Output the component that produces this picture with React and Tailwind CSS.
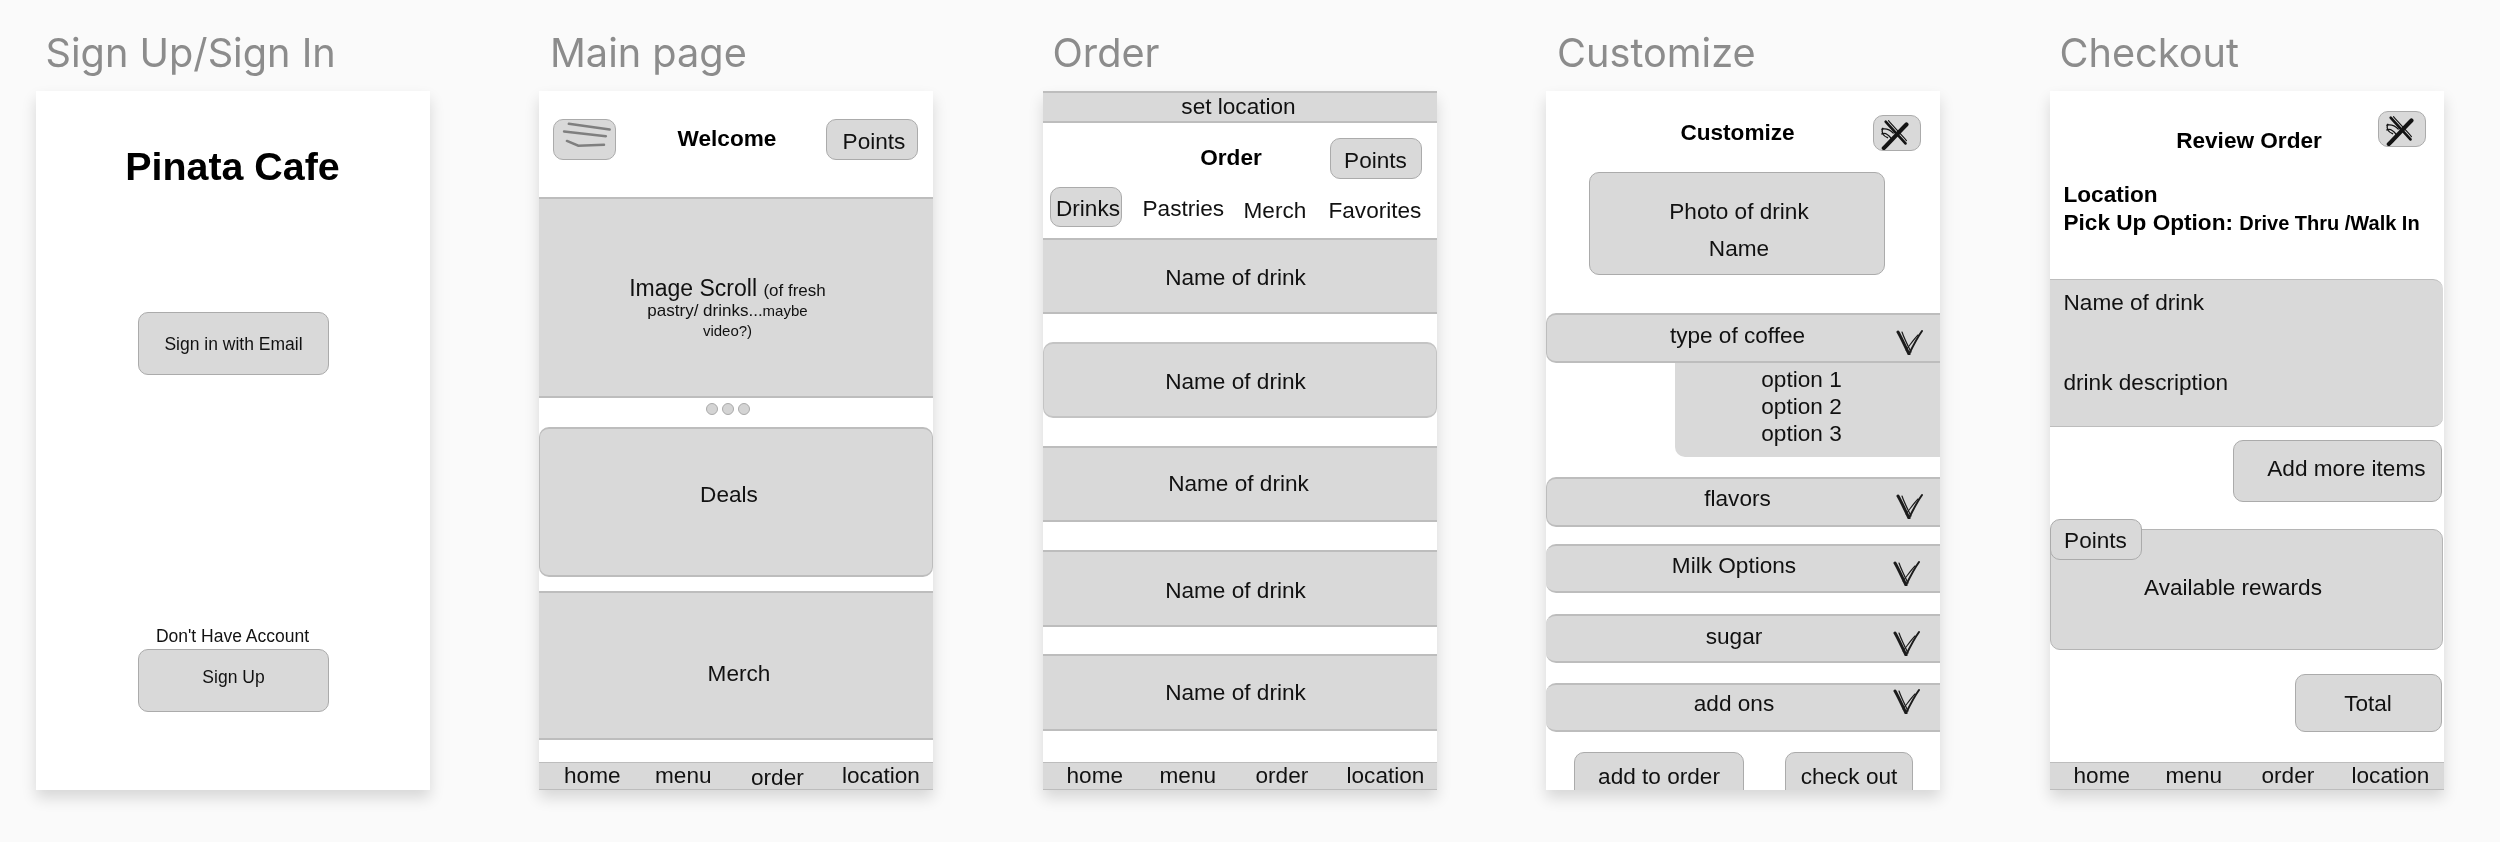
const FONT = "font-['Liberation_Sans',Arial,sans-serif]";

function Frame({ title, titleClass = "ml-[11px]", children }) {
  return (
    <div className="flex w-[394px] flex-col">
      <div className={`flex h-[91px] items-start pt-[28px] font-['Inter',sans-serif] text-[39.7px] leading-[50px] text-[#8c8c8c] ${titleClass}`}>
        {title}
      </div>
      <div className={`flex h-[699px] flex-col overflow-hidden bg-white text-[22.6px] leading-[26px] text-[#111] shadow-[0_8px_14px_rgba(0,0,0,0.14)] ${FONT}`}>
        {children}
      </div>
    </div>
  );
}

function Nav({ cols, orderClass = "" }) {
  return (
    <div className={`mt-auto grid h-[28px] shrink-0 items-start border-y border-[#bdbdbd] bg-[#d9d9d9] ${cols}`}>
      <span>home</span>
      <span>menu</span>
      <span className={orderClass}>order</span>
      <span>location</span>
    </div>
  );
}

function Chevron({ className }) {
  return (
    <svg viewBox="0 0 28 26" className={`absolute h-[26px] w-[28px] ${className}`} fill="none" stroke="#1c1c1c" strokeLinecap="round">
      <path d="M2 3 C5 8 9 17 13 25" strokeWidth="3" />
      <path d="M6 3 C8 9 12 17 15 23" strokeWidth="1.2" />
      <path d="M13 25 C17 17 21 9 26 2" strokeWidth="2" />
      <path d="M10 21 C14 16 18 10 22 6" strokeWidth="1.1" />
    </svg>
  );
}

function CloseSketch() {
  return (
    <svg viewBox="0 0 48 36" className="h-full w-full" fill="none" stroke="#141414" strokeLinecap="round">
      <path d="M10 34 C18 26 26 17 34 9" strokeWidth="4.4" />
      <path d="M12 6 C19 14 26 21 33 29" strokeWidth="2.8" />
      <path d="M15 5 C21 12 27 18 34 26" strokeWidth="1.2" />
      <path d="M8 14 C12 13 17 15 20 18 M8 19 C12 17 15 20 18 24 M9 13 C7 17 9 21 14 23" strokeWidth="1.4" />
    </svg>
  );
}

function Btn({ className = "", children }) {
  return (
    <div className={`flex shrink-0 items-center justify-center rounded-[10px] border border-[#ababab] bg-[#d9d9d9] ${className}`}>
      {children}
    </div>
  );
}

function Band({ className = "", children }) {
  return (
    <div className={`relative flex shrink-0 items-center justify-center border-y-2 border-[#bdbdbd] bg-[#d9d9d9] ${className}`}>
      {children}
    </div>
  );
}

function SignIn() {
  return (
    <Frame title="Sign Up/Sign In" titleClass="ml-[10px]">
      <div className="flex flex-col items-center text-[17.5px]">
        <h1 className="mt-[53px] text-[39.4px] leading-[44px] font-bold text-black">Pinata Cafe</h1>
        <Btn className="mt-[124px] ml-[2px] h-[63px] w-[191px]">Sign in with Email</Btn>
        <div className="mt-[251px] leading-[20px]">Don't Have Account</div>
        <Btn className="mt-[3px] ml-[2px] h-[63px] w-[191px] pb-[8px]">Sign Up</Btn>
      </div>
    </Frame>
  );
}

function MainPage() {
  return (
    <Frame title="Main page">
      <div className="flex h-[106px] shrink-0 items-start pt-[28px]">
        <Btn className="ml-[14px] h-[41px] w-[63px]">
          <svg viewBox="0 0 63 41" className="h-full w-full" fill="none" stroke="#7f7f7f" strokeWidth="2.6" strokeLinecap="round">
            <path d="M15 4 L58 10" />
            <path d="M10 12 L54 17" />
            <path d="M13 22 L25 27 L52 26" />
          </svg>
        </Btn>
        <div className="mt-[7px] flex-1 pl-[12px] text-center font-bold text-black">Welcome</div>
        <Btn className="mr-[15px] h-[41px] w-[92px] pt-[4px] pl-[4px]">Points</Btn>
      </div>
      <Band className="h-[201px] flex-col pt-[20px] pr-[17px]">
        <div className="h-[25px] text-[23px]">Image Scroll <span className="text-[17px]">(of fresh</span></div>
        <div className="h-[21px] text-[17px] leading-[22px]">pastry/ drinks...<span className="text-[15px]">maybe</span></div>
        <div className="h-[20px] text-[15px] leading-[20px]">video?)</div>
      </Band>
      <div className="flex h-[29px] shrink-0 items-center justify-center gap-[4px] pr-[17px] pb-[7px]">
        <span className="h-[12px] w-[12px] rounded-full border border-[#aaa] bg-[#d4d4d4]" />
        <span className="h-[12px] w-[12px] rounded-full border border-[#aaa] bg-[#d4d4d4]" />
        <span className="h-[12px] w-[12px] rounded-full border border-[#aaa] bg-[#d4d4d4]" />
      </div>
      <Band className="h-[150px] rounded-[10px] border-x border-[#b5b5b5] pr-[14px] pb-[14px]">Deals</Band>
      <Band className="mt-[14px] h-[149px] pt-[16px] pl-[6px]">Merch</Band>
      <Nav cols="grid-cols-[91px_96px_91px_1fr] pl-[25px]" orderClass="pt-[2px]" />
    </Frame>
  );
}

function Order() {
  return (
    <Frame title="Order" titleClass="ml-[10px]">
      <Band className="h-[32px] pb-[1px] pr-[2px]">set location</Band>
      <div className="flex shrink-0 items-start pt-[15px]">
        <div className="mt-[7px] flex-1 pl-[90px] text-center font-bold text-black">Order</div>
        <Btn className="mr-[15px] h-[41px] w-[92px] pt-[4px]">Points</Btn>
      </div>
      <div className="mt-[8px] grid h-[51px] shrink-0 grid-cols-[93px_101px_85px_1fr] items-start pl-[7px]">
        <Btn className="h-[40px] w-[72px] pt-[4px] pl-[5px]">Drinks</Btn>
        <span className="mt-[9px]">Pastries</span>
        <span className="mt-[11px]">Merch</span>
        <span className="mt-[11px]">Favorites</span>
      </div>
      <Band className="h-[76px] pt-[4px] pr-[8px]">Name of drink</Band>
      <Band className="mt-[28px] h-[76px] rounded-[10px] border-x border-[#c4c4c4] pt-[4px] pr-[8px]">Name of drink</Band>
      <Band className="mt-[28px] h-[76px] pr-[2px]">Name of drink</Band>
      <Band className="mt-[28px] h-[77px] pt-[5px] pr-[8px]">Name of drink</Band>
      <Band className="mt-[27px] h-[77px] pt-[1px] pr-[8px]">Name of drink</Band>
      <Nav cols="grid-cols-[93px_96px_91px_1fr] pl-[24px]" />
    </Frame>
  );
}

function Customize() {
  return (
    <Frame title="Customize">
      <div className="flex shrink-0 items-start pt-[24px]">
        <div className="mt-[5px] flex-1 pl-[56px] text-center font-bold text-black">Customize</div>
        <Btn className="mr-[19px] h-[36px] w-[48px] overflow-hidden"><CloseSketch /></Btn>
      </div>
      <Btn className="mt-[21px] ml-[43px] h-[103px] w-[296px] flex-col pt-[12px] pl-[4px] leading-[37px]">
        <div>Photo of drink</div>
        <div>Name</div>
      </Btn>
      <Band className="mt-[38px] h-[50px] rounded-l-[10px] border-l border-[#bbb] pr-[12px] pb-[4px]">
        type of coffee
        <Chevron className="top-[14px] right-[16px]" />
      </Band>
      <div className="ml-[129px] flex h-[94px] shrink-0 flex-col items-center rounded-bl-[10px] bg-[#d9d9d9] pt-[3px] pr-[12px] leading-[27px]">
        <div>option 1</div>
        <div>option 2</div>
        <div>option 3</div>
      </div>
      <Band className="mt-[20px] h-[50px] rounded-l-[10px] border-l border-[#bbb] pr-[12px] pb-[6px]">
        flavors
        <Chevron className="top-[14px] right-[16px]" />
      </Band>
      <Band className="mt-[17px] h-[49px] rounded-l-[10px] pr-[18px] pb-[5px]">
        Milk Options
        <Chevron className="top-[14px] right-[19px]" />
      </Band>
      <Band className="mt-[21px] h-[49px] rounded-l-[10px] pr-[18px] pb-[3px]">
        sugar
        <Chevron className="top-[14px] right-[19px]" />
      </Band>
      <Band className="mt-[20px] h-[49px] rounded-l-[10px] pr-[18px] pb-[7px]">
        add ons
        <Chevron className="top-[3px] right-[19px]" />
      </Band>
      <div className="mt-[20px] flex shrink-0">
        <Btn className="ml-[28px] h-[50px] w-[170px] items-start pt-[11px]">add to order</Btn>
        <Btn className="ml-[41px] h-[50px] w-[128px] items-start pt-[11px]">check out</Btn>
      </div>
    </Frame>
  );
}

function Checkout() {
  return (
    <Frame title="Checkout" titleClass="ml-[10px]">
      <div className="flex shrink-0 items-start pt-[20px]">
        <div className="mt-[17px] flex-1 pl-[71px] text-center font-bold text-black">Review Order</div>
        <Btn className="mr-[18px] h-[36px] w-[48px] overflow-hidden"><CloseSketch /></Btn>
      </div>
      <div className="mt-[27px] shrink-0 pl-[14px] leading-[28px] font-bold text-black">
        <div>Location</div>
        <div>Pick Up Option: <span className="text-[20px]">Drive Thru /Walk In</span></div>
      </div>
      <div className="mt-[42px] mr-[1px] flex h-[148px] shrink-0 flex-col rounded-r-[10px] border-y border-[#bdbdbd] bg-[#d9d9d9] pl-[14px]">
        <div className="mt-[10px]">Name of drink</div>
        <div className="mt-[54px]">drink description</div>
      </div>
      <Btn className="mt-[13px] ml-[183px] h-[62px] w-[209px] justify-end pr-[15px] pb-[4px]">Add more items</Btn>
      <div className="relative mt-[27px] mr-[1px] flex h-[121px] shrink-0 items-center justify-center rounded-[10px] border border-[#b5b5b5] bg-[#d9d9d9] pr-[26px] pb-[3px]">
        Available rewards
        <Btn className="absolute -top-[11px] -left-[1px] h-[41px] w-[92px] pt-[3px]">Points</Btn>
      </div>
      <Btn className="mt-[24px] ml-[245px] h-[58px] w-[147px] pt-[2px]">Total</Btn>
      <Nav cols="grid-cols-[92px_96px_90px_1fr] pl-[24px]" />
    </Frame>
  );
}

export default function App() {
  return (
    <div className="flex h-[842px] w-[2500px] gap-[109.5px] overflow-hidden bg-[#fafafa] pl-[35.5px] blur-[0.4px]">
      <SignIn />
      <MainPage />
      <Order />
      <Customize />
      <Checkout />
    </div>
  );
}
